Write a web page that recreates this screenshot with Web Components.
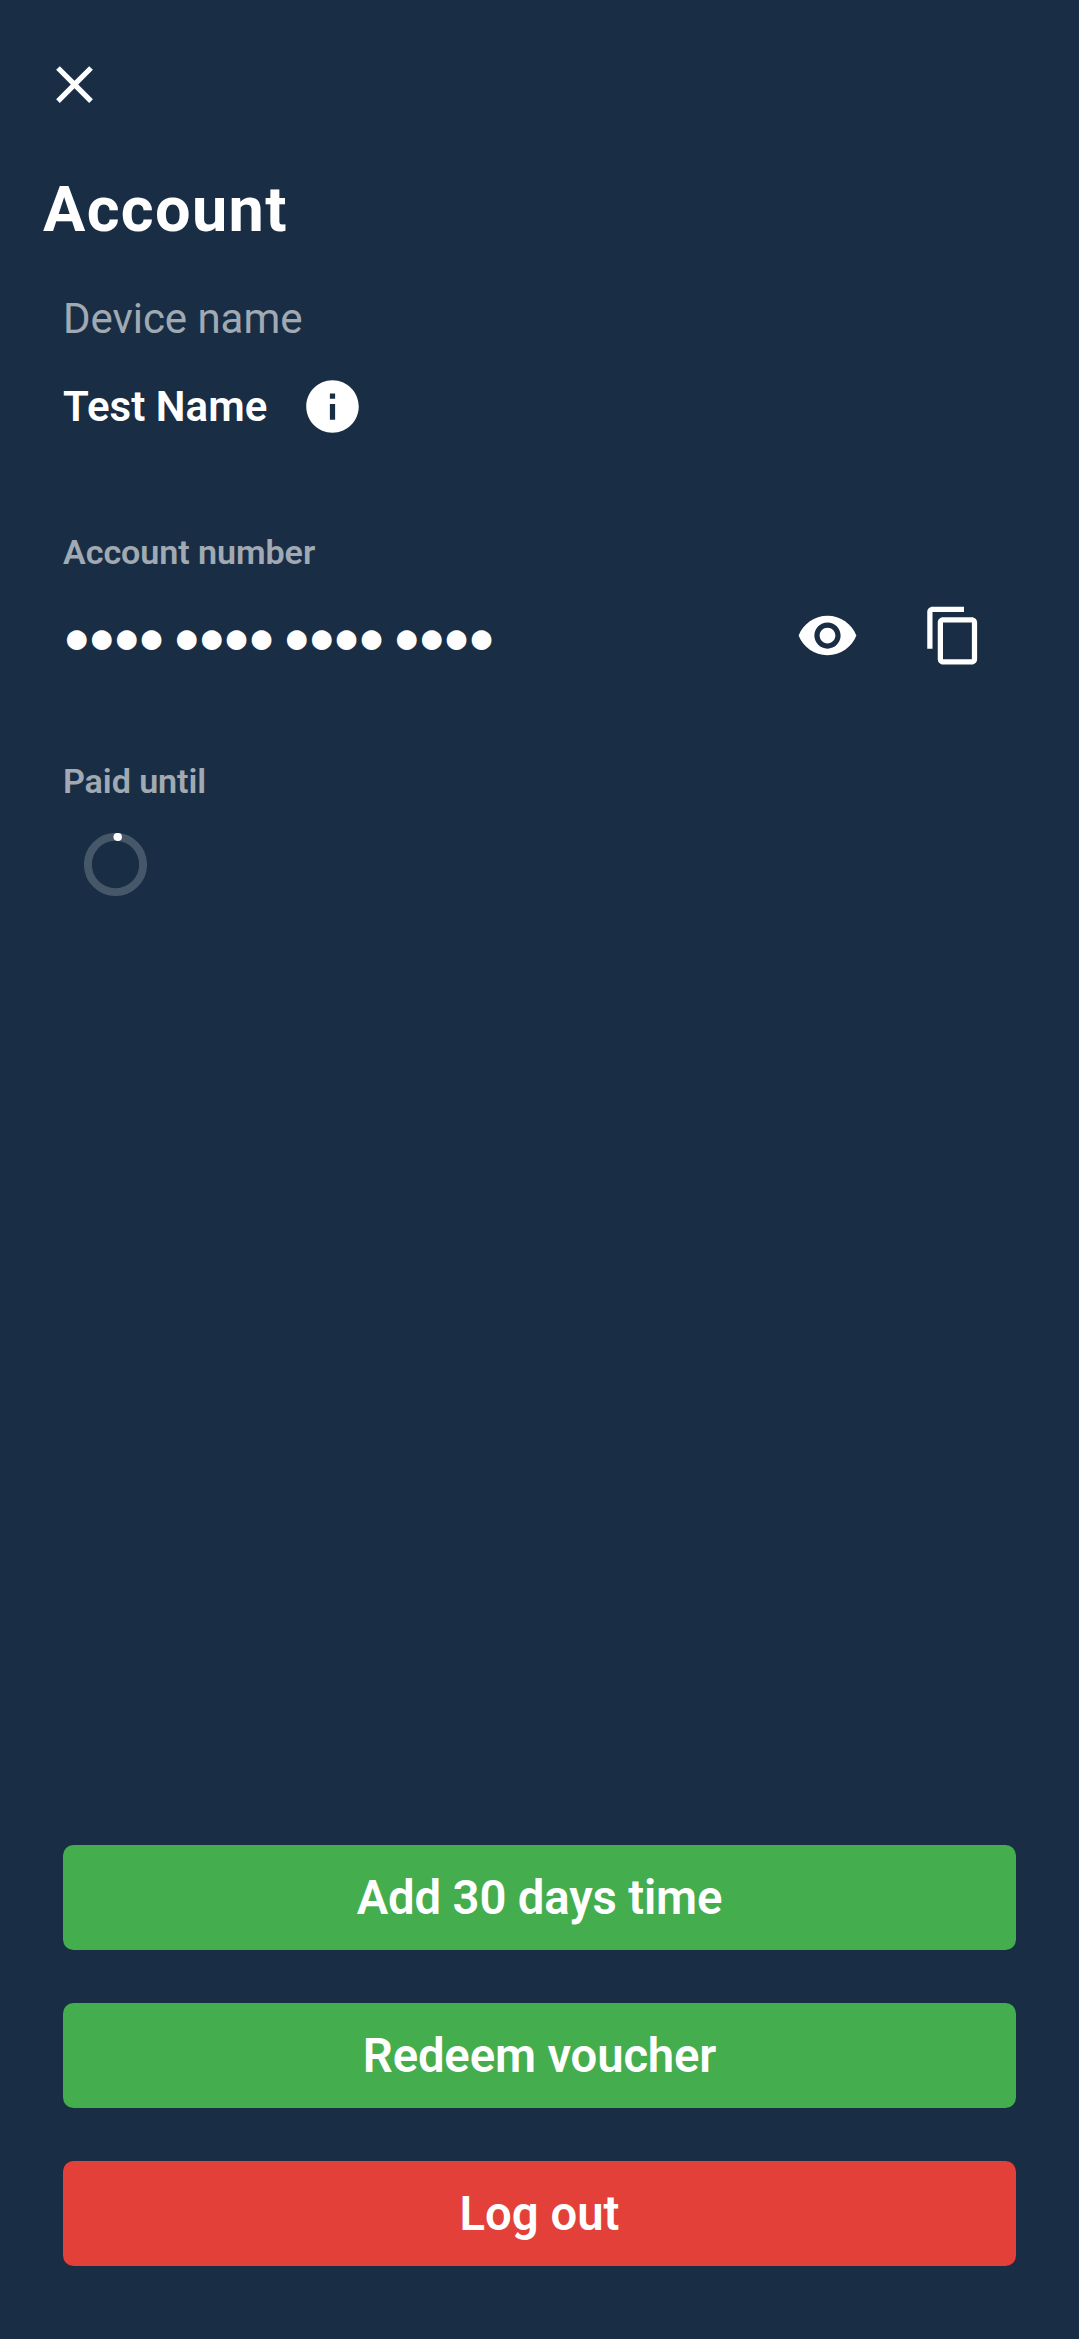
<!DOCTYPE html>
<html lang="en">
<head>
<meta charset="utf-8">
<title>Account</title>
<style>
html,body{margin:0;height:100%;background:#192e45}
body{font-family:Roboto,"Liberation Sans",sans-serif;color:#fff}
</style>
</head>
<body>
<account-screen></account-screen>
<script>
const define = (name, html) => customElements.define(name, class extends HTMLElement {
  constructor() {
    super();
    this.attachShadow({ mode: 'open' }).innerHTML = html;
  }
});

const ICONS = {
  close: 'M19 6.41L17.59 5 12 10.59 6.41 5 5 6.41 10.59 12 5 17.59 6.41 19 12 13.41 17.59 19 19 17.59 13.41 12z',
  info: 'M12 2C6.48 2 2 6.48 2 12s4.48 10 10 10 10-4.48 10-10S17.52 2 12 2zm1 15h-2v-6h2v6zm0-8h-2V7h2v2z',
  eye: 'M12 4.5C7 4.5 2.73 7.61 1 12c1.73 4.39 6 7.5 11 7.5s9.27-3.11 11-7.5c-1.73-4.39-6-7.5-11-7.5zM12 17c-2.76 0-5-2.24-5-5s2.24-5 5-5 5 2.24 5 5-2.24 5-5 5zm0-8c-1.66 0-3 1.34-3 3s1.34 3 3 3 3-1.34 3-3-1.34-3-3-3z',
  copy: 'M16 1H4c-1.1 0-2 .9-2 2v14h2V3h12V1zm3 4H8c-1.1 0-2 .9-2 2v14c0 1.1.9 2 2 2h11c1.1 0 2-.9 2-2V7c0-1.1-.9-2-2-2zm0 16H8V7h11v14z'
};
customElements.define('app-icon', class extends HTMLElement {
  constructor() {
    super();
    this.attachShadow({ mode: 'open' });
  }
  connectedCallback() {
    this.shadowRoot.innerHTML = `<style>:host{display:block;width:63px;height:63px;flex:none}svg{display:block}</style>
      <svg width="63" height="63" viewBox="0 0 24 24" fill="#fff"><path d="${ICONS[this.getAttribute('name')]}"/></svg>`;
  }
});

define('app-spinner', `<style>:host{display:block;width:64px;height:64px}svg{display:block}</style>
  <svg width="64" height="64" viewBox="0 0 64 64" fill="none">
    <circle cx="31.5" cy="31.5" r="27.6" stroke="#fff" stroke-opacity=".2" stroke-width="7.9"/>
    <path d="M33.4 3.95L34 3.98" stroke="#fff" stroke-width="7.9" stroke-linecap="round"/>
  </svg>`);

define('account-field', `<style>
  :host{display:flex;flex-direction:column;align-items:stretch}
  .label{color:rgba(255,255,255,.6);font-size:34.125px;line-height:40px;font-weight:600;letter-spacing:-.08px;white-space:nowrap}
  :host([large]) .label{font-size:42px;line-height:50px;font-weight:400;letter-spacing:-.05px}
  .value{display:flex;align-items:center;font-size:42px;line-height:63px;font-weight:600;height:63px;margin-top:var(--value-gap,31px)}
  </style><div class="label"><slot name="label"></slot></div><div class="value"><slot></slot></div>`);

define('action-button', `<style>
  :host{display:block}
  button{display:block;box-sizing:border-box;width:100%;height:105px;padding:2px 0 0;border:0;border-radius:10.5px;background:var(--tone,#44ad4d);
    color:#fff;font:600 47.25px/103px Roboto,"Liberation Sans",sans-serif;letter-spacing:var(--tracking,-.15px);text-align:center}
  </style><button><slot></slot></button>`);

define('account-screen', `<style>
  :host{display:flex;flex-direction:column;box-sizing:border-box;height:2339px;padding:53px 63px 73px}
  .close{margin-left:-20px}
  h1{margin:57px 0 0 -20px;font-size:63px;line-height:74px;font-weight:700;letter-spacing:1.35px}
  .device{margin-top:47px;--value-gap:31px}
  .number{margin-top:94px;--value-gap:32px}
  .paid{margin-top:94px;--value-gap:32px}
  .name{white-space:nowrap;letter-spacing:.04px}
  .info{margin-left:34px}
  .dots{flex:1;white-space:pre;font-size:45.6px;letter-spacing:-2.6px;word-spacing:1.5px;padding-top:3px}
  .eye{margin-right:63px}
  .copy{margin-right:31px}
  .spin{margin-left:21px}
  .actions{display:flex;flex-direction:column;gap:53px;margin-top:auto}
  .danger{--tone:#e34039;--tracking:0}
  </style>
  <app-icon class="close" name="close"></app-icon>
  <h1>Account</h1>
  <account-field class="device" large><span slot="label">Device name</span><span class="name">Test Name</span><app-icon class="info" name="info"></app-icon></account-field>
  <account-field class="number"><span slot="label">Account number</span><span class="dots">●●●● ●●●● ●●●● ●●●●</span><app-icon class="eye" name="eye"></app-icon><app-icon class="copy" name="copy"></app-icon></account-field>
  <account-field class="paid"><span slot="label">Paid until</span><app-spinner class="spin"></app-spinner></account-field>
  <div class="actions">
    <action-button>Add 30 days time</action-button>
    <action-button>Redeem voucher</action-button>
    <action-button class="danger">Log out</action-button>
  </div>`);
</script>
</body>
</html>
